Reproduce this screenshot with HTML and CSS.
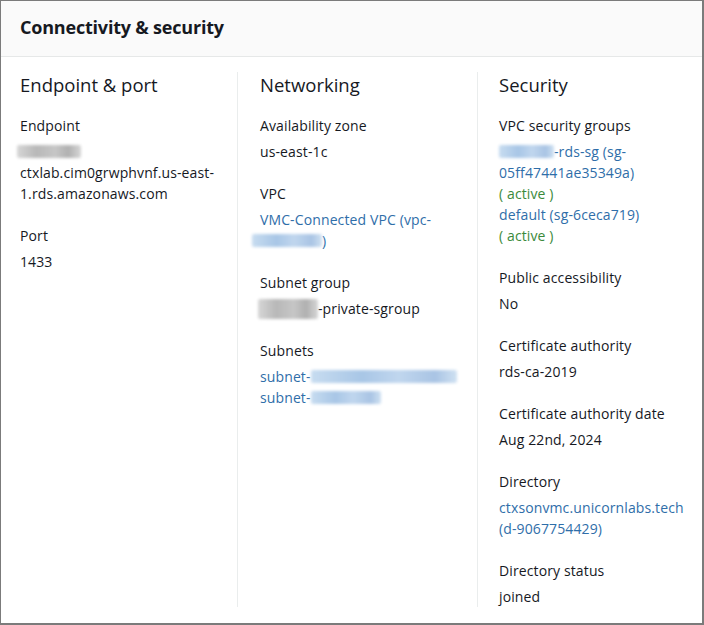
FILE: index.html
```html
<!DOCTYPE html>
<html>
<head>
<meta charset="utf-8">
<link rel="stylesheet" href="styles.css">
</head>
<body>
<div class="panel">
  <div class="panel-header"><h2 class="panel-title">Connectivity &amp; security</h2></div>
  <div class="panel-body">
    <div class="col col-first">
      <h3 class="col-title">Endpoint &amp; port</h3>
      <div class="item">
        <div class="label">Endpoint</div>
        <div class="value"><span class="blur blur-gray w-endpoint"></span><br>ctxlab.cim0grwphvnf.us-east-<br>1.rds.amazonaws.com</div>
      </div>
      <div class="item">
        <div class="label">Port</div>
        <div class="value">1433</div>
      </div>
    </div>
    <div class="col">
      <h3 class="col-title">Networking</h3>
      <div class="item">
        <div class="label">Availability zone</div>
        <div class="value">us-east-1c</div>
      </div>
      <div class="item">
        <div class="label">VPC</div>
        <div class="value link">VMC-Connected VPC (vpc-<br><span class="blur blur-blue w-vpc"></span>)</div>
      </div>
      <div class="item">
        <div class="label">Subnet group</div>
        <div class="value"><span class="blur blur-gray w-sgroup"></span>-private-sgroup</div>
      </div>
      <div class="item">
        <div class="label">Subnets</div>
        <div class="value link">subnet-<span class="blur blur-blue w-sub1"></span><br>subnet-<span class="blur blur-blue w-sub2"></span></div>
      </div>
    </div>
    <div class="col col-last">
      <h3 class="col-title">Security</h3>
      <div class="item">
        <div class="label">VPC security groups</div>
        <div class="value"><span class="link"><span class="blur blur-blue w-sg"></span>-rds-sg (sg-<br>05ff47441ae35349a)</span><br><span class="status">( active )</span><br><span class="link">default (sg-6ceca719)</span><br><span class="status">( active )</span></div>
      </div>
      <div class="item">
        <div class="label">Public accessibility</div>
        <div class="value">No</div>
      </div>
      <div class="item">
        <div class="label">Certificate authority</div>
        <div class="value">rds-ca-2019</div>
      </div>
      <div class="item">
        <div class="label">Certificate authority date</div>
        <div class="value">Aug 22nd, 2024</div>
      </div>
      <div class="item">
        <div class="label">Directory</div>
        <div class="value link">ctxsonvmc.unicornlabs.tech<br>(d-9067754429)</div>
      </div>
      <div class="item">
        <div class="label">Directory status</div>
        <div class="value">joined</div>
      </div>
    </div>
  </div>
</div>
</body>
</html>
```
FILE: styles.css
```css
html, body {
  margin: 0;
  padding: 0;
  background: #ffffff;
}

body {
  font-family: "Open Sans", "Noto Sans", sans-serif;
  color: #16191f;
}

.panel {
  width: 704px;
  height: 625px;
  box-sizing: border-box;
  border: 1px solid #7b7b7b;
  border-right-width: 2px;
  border-bottom-width: 2px;
  background: #ffffff;
  display: flex;
  flex-direction: column;
}

.panel-header {
  height: 56px;
  box-sizing: border-box;
  background: #fafafa;
  border-bottom: 1px solid #e6e8e8;
  padding: 14px 19px 0;
  flex: none;
}

.panel-title {
  margin: 0;
  font-size: 18px;
  line-height: 24px;
  font-weight: 700;
  letter-spacing: -0.2px;
  color: #16191f;
}

.panel-body {
  display: grid;
  grid-template-columns: 236px 240px 1fr;
  align-items: stretch;
  padding: 15px 0 16px;
}

.col {
  border-left: 1px solid #eaeded;
  padding-left: 22px;
  padding-top: 1px;
  display: flex;
  flex-direction: column;
  gap: 21px;
}

.col-first {
  border-left: none;
  padding-left: 19px;
}

.col-last {
  padding-left: 21px;
}

.col-title {
  margin: -1px 0 -3px;
  font-size: 18.5px;
  line-height: 25px;
  font-weight: 400;
  color: #16191f;
}

.item {
  font-size: 14px;
  line-height: 21px;
  letter-spacing: 0.12px;
}

.label {
  color: #16191f;
  margin-bottom: 5px;
}

.value {
  color: #16191f;
}

.link {
  color: #2f6ea9;
}

.status {
  color: #3b8a3b;
}

.blur {
  display: inline-block;
  height: 13px;
  vertical-align: -1px;
  filter: blur(1.5px);
  border-radius: 2px;
}

.blur-gray {
  background: linear-gradient(90deg, #d6d6d6 0%, #b8b8b8 30%, #c6c6c6 60%, #b0b0b0 80%, #d6d6d6 100%);
}

.blur-blue {
  background: linear-gradient(90deg, #c7dcf0 0%, #a8c6e6 35%, #c0d6ee 60%, #a9c4e4 85%, #cfe1f2 100%);
}

.w-endpoint { width: 64px; margin-left: -3px; }
.w-vpc { width: 70px; margin-left: -8px; }
.w-sgroup { width: 60px; height: 20px; vertical-align: -5px; margin-left: -2px; }
.w-sub1 { width: 146px; }
.w-sub2 { width: 70px; }
.w-sg { width: 55px; }
```
